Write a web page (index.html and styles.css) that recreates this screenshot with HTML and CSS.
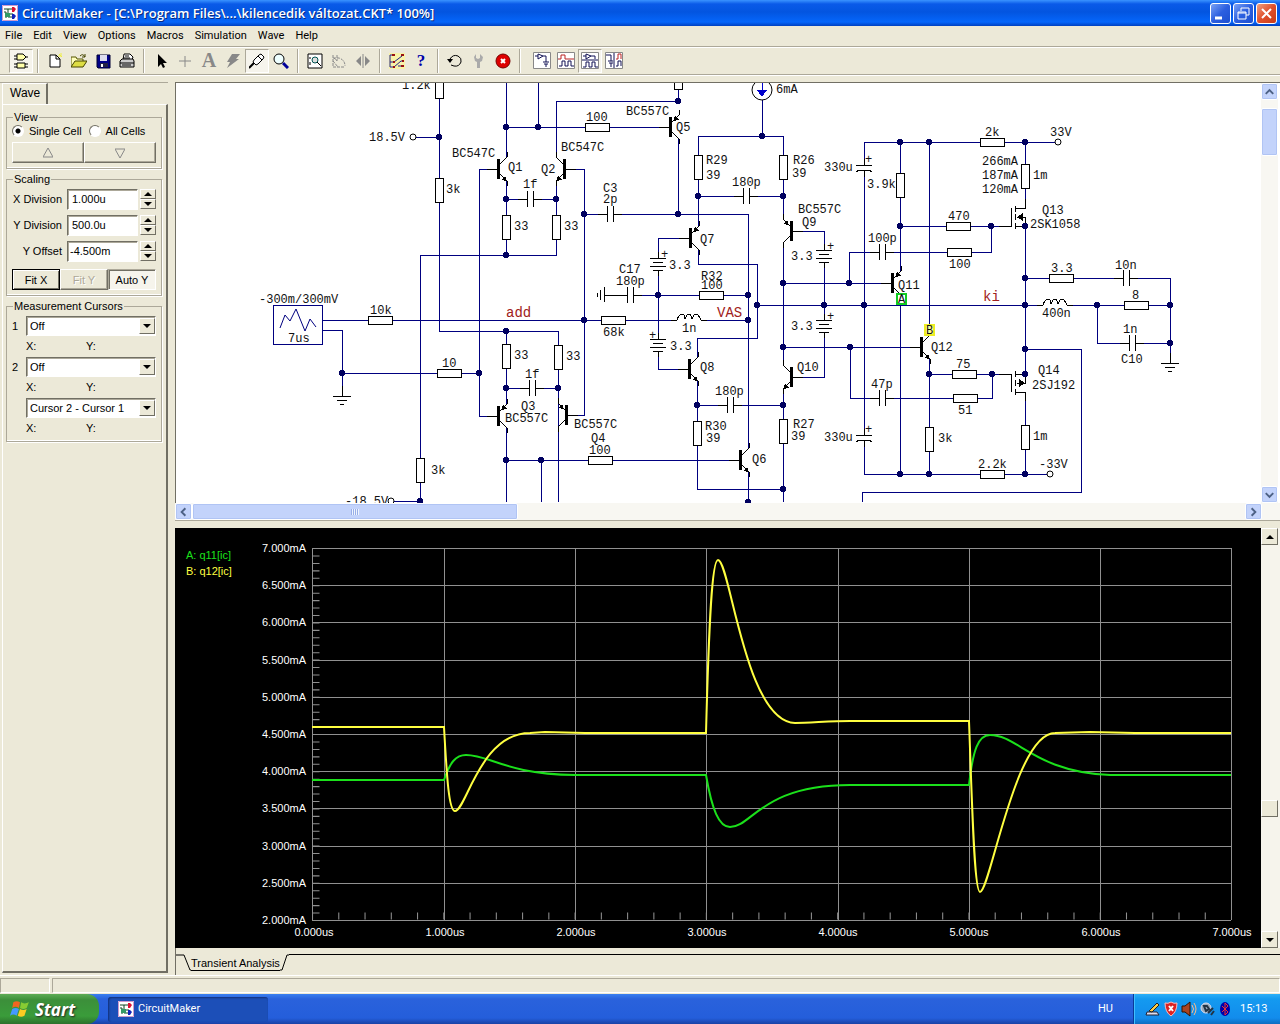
FILE: index.html
```html
<!DOCTYPE html>
<html lang="en">
<head>
    <meta charset="UTF-8">
    <meta name="viewport" content="width=device-width, initial-scale=1.0">
    <title>CircuitMaker</title>
    <link rel="stylesheet" href="styles.css">
</head>
<body>
    <!-- shared symbols -->
    <svg class="defs" aria-hidden="true">
        <defs>
            <symbol id="logo" viewBox="0 0 16 16">
                <rect width="16" height="16" fill="#fff"/>
                <path d="M.5.5h15v15H.5z" fill="none" stroke="#c9c"/>
                <path d="M2 4h9M2 7h2v6M6 4v8h6M8 9h3" fill="none" stroke="#142"/>
                <path d="M3 8h5v4H3z" fill="#396"/>
                <path d="M10 2h2l2 2-2 3h-2z" fill="#d13"/>
                <path d="M10 9h2l2 2-2 3h-2z" fill="#12b"/>
            </symbol>
            <g id="res-h"><rect x="-12" y="-4" width="24" height="8"/></g>
            <g id="res-v"><rect x="-4" y="-12" width="8" height="24"/></g>
            <g id="cap-h"><path class="gap" d="M-3 0h6"/><path d="M-12 0h9M3 0h9M-3-8v16M3-8v16"/></g>
            <g id="cap-pol"><path class="gap" d="M0-2v5"/><path d="M0-8v6M-8-2h16M0 3v7M-8 5q2-2 5-2h6q3 0 5 2"/></g>
            <g id="battery"><path class="gap" d="M0-6v12"/><path d="M-8-6h16M-5-2h10M-8 2h16M-5 6h10M0 6v6M0-6v-6"/></g>
            <g id="coil"><path class="gap" d="M-12 0h24"/><path d="M-18 0h6q2-6 5-6t3 5q2-5 4-5t3 5q2-5 4-5t5 6h6"/></g>
            <g id="gnd"><path d="M0-10V0M-9 0H9M-5 4H5M-2 8H2"/></g>
            <g id="npn">
                <path d="M-12 0h12M1-5l7-7v-5M1 5l7 7v5"/>
                <path class="solid" d="M-2-10h3v20h-3zM8 12l-6-1 4-4z"/>
            </g>
            <g id="pnp">
                <path d="M-12 0h12M1-5l7-7v-5M1 5l7 7v5"/>
                <path class="solid" d="M-2-10h3v20h-3zM2-6l2-5 4 4z"/>
            </g>
            <g id="dot"><circle r="3"/></g>
            <g id="pin"><circle r="3"/></g>
            <symbol id="xp-up" viewBox="0 0 16 16"><path d="M4 10l4-4 4 4"/></symbol>
            <symbol id="xp-down" viewBox="0 0 16 16"><path d="M4 6l4 4 4-4"/></symbol>
            <symbol id="xp-left" viewBox="0 0 16 16"><path d="M10 4L6 8l4 4"/></symbol>
            <symbol id="xp-right" viewBox="0 0 16 16"><path d="M6 4l4 4-4 4"/></symbol>
            <symbol id="tri-up" viewBox="0 0 8 8"><path d="M0 6h8L4 2z"/></symbol>
            <symbol id="tri-down" viewBox="0 0 8 8"><path d="M0 2h8L4 6z"/></symbol>
        </defs>
    </svg>

    <header class="titlebar">
        <svg class="app-icon"><use href="#logo"/></svg>
        <h1>CircuitMaker - [C:\Program Files\...\kilencedik változat.CKT* 100%]</h1>
        <div class="window-buttons">
            <button aria-label="Minimize"><svg viewBox="0 0 19 19"><path d="M4 14h7" stroke-width="3"/></svg></button>
            <button aria-label="Restore"><svg viewBox="0 0 19 19"><path d="M7 7V4h8v7h-3M4 8h8v7H4zM4 9h8" stroke-width="1"/></svg></button>
            <button class="close" aria-label="Close"><svg viewBox="0 0 19 19"><path d="M5 5l9 9M14 5l-9 9" stroke-width="2"/></svg></button>
        </div>
    </header>

    <nav class="menubar">
        <a href="#">File</a>
        <a href="#">Edit</a>
        <a href="#">View</a>
        <a href="#">Options</a>
        <a href="#">Macros</a>
        <a href="#">Simulation</a>
        <a href="#">Wave</a>
        <a href="#">Help</a>
    </nav>

    <div class="toolbar">
        <button class="pressed" aria-label="Parts"><svg viewBox="0 0 16 16"><path d="M4 1h6l3 3-3 3H4zM4 10h8v5H4z" fill="#ffa" stroke="#000"/><path d="M1 3h3M1 6h3M12 4h3M1 11h3M1 14h3M12 11h3M12 14h3" stroke="#000"/></svg></button>
        <i></i>
        <button aria-label="New"><svg viewBox="0 0 16 16"><path d="M12 1l3 3M14 0v2M11 3h4" stroke="#ee4"/><path d="M3 2h6l4 4v8H3z" fill="#fff" stroke="#000"/><path d="M9 2v4h4" fill="none" stroke="#000"/></svg></button>
        <button aria-label="Open"><svg viewBox="0 0 16 16"><path d="M0 13V4h5l1 2h6v2" fill="#ffb" stroke="#550"/><path d="M0 14l4-6h12l-4 6z" fill="#dd4" stroke="#440"/><path d="M9 3q3-3 5 1M14 1v3h-3" fill="none" stroke="#440"/></svg></button>
        <button aria-label="Save"><svg viewBox="0 0 16 16"><path d="M2 2h13v13H3l-1-1z" fill="#008" stroke="#003"/><path d="M5 2h7v6H5z" fill="#dde"/><path d="M5 10h8v4H5z" fill="#224"/><path d="M6 11h2v3H6z" fill="#fff"/></svg></button>
        <button aria-label="Print"><svg viewBox="0 0 16 16"><path d="M4 7l1-6h6l3 3-1 3" fill="#fff" stroke="#000"/><path d="M1 8l2-2h11l1 2v6H1z" fill="#ccc" stroke="#000"/><path d="M1 10h14M6 3h4M5 5h6M3 12h9" stroke="#000"/></svg></button>
        <i></i>
        <button aria-label="Select"><svg viewBox="0 0 16 16"><path d="M5 1v13l3-3 2 4 2-1-2-4h4z" fill="#000"/></svg></button>
        <button aria-label="Wire"><svg viewBox="0 0 16 16"><path d="M8 3v11M2 8h12" stroke="#888"/></svg></button>
        <button class="letter" aria-label="Text">A</button>
        <button aria-label="Delete"><svg viewBox="0 0 16 16"><path d="M7 1h8l-4 5h3L2 15l3-6H2z" fill="#888"/></svg></button>
        <button class="pressed" aria-label="Probe"><svg viewBox="0 0 16 16"><path d="M0 15l5-5" stroke="#000" stroke-width="2"/><path d="M4 9l1-2 5-5 2-1 3 3-1 2-5 5-2 1z" fill="#fff" stroke="#000"/><path d="M9 3l4 4" stroke="#000"/></svg></button>
        <button aria-label="Zoom"><svg viewBox="0 0 16 16"><circle cx="6" cy="6" r="5" fill="#eff" stroke="#000"/><path d="M10 10l5 5" stroke="#009" stroke-width="3"/></svg></button>
        <i></i>
        <button aria-label="Fit"><svg viewBox="0 0 16 16"><path d="M1 1h14v14H1z" fill="#fff" stroke="#000"/><circle cx="8" cy="7" r="3" fill="#ddd" stroke="#055"/><path d="M10 9l4 4M3 4v2M3 9v3" stroke="#000"/></svg></button>
        <button aria-label="Rotate"><svg viewBox="0 0 16 16"><path d="M2 2v12h12M2 5h6q6 2 6 8M6 2v6l-3-3M2 8l5 6" fill="none" stroke="#888" stroke-dasharray="3 1"/></svg></button>
        <button aria-label="Mirror"><svg viewBox="0 0 16 16"><path d="M8 1v14" stroke="#888"/><path d="M6 3v10L1 8zM10 3v10l5-5z" fill="#888"/></svg></button>
        <i></i>
        <button aria-label="Digital options"><svg viewBox="0 0 16 16"><path d="M0 0h16v16H0z" fill="#f8f3a8"/><path d="M4 2H1v12h4M1 9h4l8-6M5 14l7-6h3M9 13h5" stroke="#228" fill="none"/><path d="M3 1h3v2H3zM12 1h3v2h-3zM4 8h2v2H4zM13 7h2v2h-2zM4 13h2v2H4zM12 12h3v2h-3z" fill="#911"/></svg></button>
        <button class="letter help" aria-label="Help">?</button>
        <i></i>
        <button aria-label="Reset"><svg viewBox="0 0 16 16"><path d="M3 6q3-5 8-3 4 2 3 6-2 5-7 4l-3-1" fill="none" stroke="#000"/><path d="M0 6h6l-3 4z" fill="#000"/></svg></button>
        <button aria-label="Step"><svg viewBox="0 0 16 16"><path d="M5 1v4l2 1 2-1V1l3 3-1 4-2 1v6H6V9L4 8 3 4z" fill="#aaa"/></svg></button>
        <button aria-label="Stop"><svg viewBox="0 0 16 16"><circle cx="8" cy="8" r="7" fill="#d00" stroke="#700"/><path d="M6 6l4 4M10 6l-4 4" stroke="#fff" stroke-width="2"/></svg></button>
        <i></i>
        <div class="view-buttons">
            <button aria-label="Schematic"><svg viewBox="0 0 18 18"><path d="M.5.5h17v16H.5z" fill="#fff" stroke="#888"/><path d="M2 4h3M10 4h3v6M5 2v5l5-3zM10 10h6M11 12h4M13 12v3" fill="none" stroke="#115"/></svg></button>
            <button aria-label="Waves"><svg viewBox="0 0 18 18"><path d="M.5.5h17v16H.5z" fill="#fff" stroke="#888"/><path d="M1 7h3V3h4v4h9" fill="none" stroke="#b22"/><path d="M2 14h3V9h3v5h3V9h3v5h3" fill="none" stroke="#115"/></svg></button>
            <button class="pressed" aria-label="Split"><svg viewBox="0 0 18 18"><path d="M.5.5h17v16H.5z" fill="#fff" stroke="#888"/><path d="M2 4h3M5 2v5l5-3zM10 4h4v3M1 8h16M2 15h3v-5h3v5h3v-5h3v5h3" fill="none" stroke="#115"/></svg></button>
            <button aria-label="Side by side"><svg viewBox="0 0 18 18"><path d="M.5.5h17v16H.5z" fill="#fff" stroke="#888"/><path d="M1 3h5v6M3 9h5M4 11h4M6 11v4M9 1v15" fill="none" stroke="#115"/><path d="M11 7h2V2h3v5" fill="none" stroke="#b22"/><path d="M11 14h2V9h3v5" fill="none" stroke="#115"/></svg></button>
        </div>
    </div>

    <main class="workspace">
        <aside class="sidebar">
            <div class="side-tab">Wave</div>
            <form class="side-body">
                <fieldset>
                    <legend>View</legend>
                    <div class="radios">
                        <label><input type="radio" name="cells" checked>Single Cell</label>
                        <label><input type="radio" name="cells">All Cells</label>
                    </div>
                    <div class="cell-buttons">
                        <button type="button" aria-label="Previous cell"><svg viewBox="0 0 10 10"><path d="M0 9h10L5 0z"/></svg></button>
                        <button type="button" aria-label="Next cell"><svg viewBox="0 0 10 10"><path d="M0 1h10L5 10z"/></svg></button>
                    </div>
                </fieldset>
                <fieldset class="scaling">
                    <legend>Scaling</legend>
                    <div class="field">
                        <label for="xdiv">X Division</label>
                        <input type="text" id="xdiv" value="1.000u">
                        <span class="spin"><button type="button" aria-label="Increase"><svg><use href="#tri-up"/></svg></button><button type="button" aria-label="Decrease"><svg><use href="#tri-down"/></svg></button></span>
                    </div>
                    <div class="field">
                        <label for="ydiv">Y Division</label>
                        <input type="text" id="ydiv" value="500.0u">
                        <span class="spin"><button type="button" aria-label="Increase"><svg><use href="#tri-up"/></svg></button><button type="button" aria-label="Decrease"><svg><use href="#tri-down"/></svg></button></span>
                    </div>
                    <div class="field">
                        <label for="yoff">Y Offset</label>
                        <input type="text" id="yoff" class="tight" value="-4.500m">
                        <span class="spin"><button type="button" aria-label="Increase"><svg><use href="#tri-up"/></svg></button><button type="button" aria-label="Decrease"><svg><use href="#tri-down"/></svg></button></span>
                    </div>
                    <div class="fit-buttons">
                        <button type="button" class="default">Fit X</button>
                        <button type="button" disabled>Fit Y</button>
                        <button type="button" class="pressed">Auto Y</button>
                    </div>
                </fieldset>
                <fieldset class="cursors">
                    <legend>Measurement Cursors</legend>
                    <div class="cursor">
                        <label for="cur1">1</label>
                        <span class="combo"><select id="cur1"><option>Off</option></select><span class="drop"><svg><use href="#tri-down"/></svg></span></span>
                        <p><span>X:</span><span>Y:</span></p>
                    </div>
                    <div class="cursor">
                        <label for="cur2">2</label>
                        <span class="combo"><select id="cur2"><option>Off</option></select><span class="drop"><svg><use href="#tri-down"/></svg></span></span>
                        <p><span>X:</span><span>Y:</span></p>
                    </div>
                    <div class="cursor">
                        <span class="combo"><select aria-label="Difference"><option>Cursor 2 - Cursor 1</option></select><span class="drop"><svg><use href="#tri-down"/></svg></span></span>
                        <p><span>X:</span><span>Y:</span></p>
                    </div>
                </fieldset>
            </form>
        </aside>

        <section class="documents">
            <div class="schematic-pane">
                <svg class="schematic">
                    <g transform="translate(-176 -83)">
                        <!-- wires -->
                        <path class="wire" d="M439 83V331H558V428M413 137H439M506 255H420V501H391M479 169V416M479 169H498M479 416H498
                            M506 83V157M506 181V255H556V181M556 157V101H678V83M538 83V127M506 127H668M506 199H556
                            M566 169H584V415H566M584 214H748V448M678 139V214M506 331V404M506 388H558M506 428V502M541 460V502M558 427V502M506 460H738
                            M322 320H748M322 330H342V396M342 373H479M604 295H748
                            M698 226V136H783V219M762 98V136M698 196H783M690 238H658V369H690M698 250V264H757V338H697V357M697 381V489H783M697 405H783
                            M793 231H824V377H793M783 243V365M783 389V502M757 305H1170M783 283H892M783 347H921M748 472V502
                            M864 142V474H1050M864 142H1055M900 142V271M900 304V474M929 142V325M929 359V474
                            M849 283V252H991V226M900 226H1011M850 347V398H992V374M929 374H1011
                            M1025 142V208M1025 226V374M1025 392V474M1025 278H1170V363M1097 305V343H1170M1025 349H1081V492H862V502"/>
                        <!-- function generator -->
                        <path class="box" d="M273 305h49v39h-49z"/>
                        <path class="trace" d="M280 328l5-13 5 6 6-12 9 22 5-12 6 8"/>
                        <!-- parts -->
                        <g class="part">
                            <use href="#res-v" x="439" y="86"/><use href="#res-v" x="439" y="190"/><use href="#res-v" x="420" y="470"/>
                            <use href="#res-v" x="506" y="227"/><use href="#res-v" x="556" y="227"/><use href="#res-v" x="506" y="356"/><use href="#res-v" x="558" y="357"/>
                            <use href="#res-v" x="678" y="77"/><use href="#res-v" x="698" y="167"/><use href="#res-v" x="783" y="167"/>
                            <use href="#res-v" x="697" y="433"/><use href="#res-v" x="783" y="431"/><use href="#res-v" x="900" y="185"/>
                            <use href="#res-v" x="929" y="439"/><use href="#res-v" x="1025" y="176"/><use href="#res-v" x="1025" y="437"/>
                            <use href="#res-h" x="597" y="127"/><use href="#res-h" x="380" y="320"/><use href="#res-h" x="449" y="373"/>
                            <use href="#res-h" x="613" y="320"/><use href="#res-h" x="711" y="295"/><use href="#res-h" x="600" y="460"/>
                            <use href="#res-h" x="992" y="142"/><use href="#res-h" x="958" y="226"/><use href="#res-h" x="959" y="252"/>
                            <use href="#res-h" x="964" y="374"/><use href="#res-h" x="965" y="398"/><use href="#res-h" x="992" y="474"/>
                            <use href="#res-h" x="1061" y="278"/><use href="#res-h" x="1136" y="305"/>
                            <use href="#cap-h" x="530" y="199"/><use href="#cap-h" x="532" y="388"/><use href="#cap-h" x="610" y="214"/>
                            <use href="#cap-h" x="630" y="295"/><use href="#cap-h" x="746" y="196"/><use href="#cap-h" x="730" y="405"/>
                            <use href="#cap-h" x="882" y="252"/><use href="#cap-h" x="882" y="398"/><use href="#cap-h" x="1126" y="278"/><use href="#cap-h" x="1132" y="343"/>
                            <use href="#cap-pol" x="864" y="167"/><use href="#cap-pol" x="864" y="437"/>
                            <use href="#battery" x="658" y="264"/><use href="#battery" x="658" y="345"/><use href="#battery" x="824" y="256"/><use href="#battery" x="824" y="326"/>
                            <use href="#coil" x="689" y="320"/><use href="#coil" x="1055" y="305"/>
                            <use href="#gnd" x="342" y="396"/><use href="#gnd" x="1170" y="363"/>
                            <path d="M604 287v15M600 290v10M597 293v4M604 295h16"/>
                            <use href="#npn" x="499" y="169"/><use href="#npn" transform="translate(564 169) scale(-1 1)"/>
                            <use href="#pnp" x="499" y="416"/><use href="#pnp" transform="translate(566 415) scale(-1 1)"/>
                            <use href="#pnp" x="671" y="127"/><use href="#pnp" x="691" y="238"/><use href="#pnp" transform="translate(791 231) scale(-1 1)"/>
                            <use href="#npn" x="690" y="369"/><use href="#npn" x="741" y="460"/><use href="#npn" transform="translate(791 377) scale(-1 1)"/>
                            <use href="#pnp" x="893" y="283"/><use href="#npn" x="922" y="347"/>
                            <path d="M1011 208v18h-12M1015 206v6M1015 214v6M1015 223v6M1015 208h10v-9M1015 226h10v-9h-8"/>
                            <path class="solid" d="M1017 217l6-4v8z"/>
                            <path d="M1011 392v-18h-12M1015 371v6M1015 380v6M1015 389v6M1015 392h10v9M1015 374h10v9h-8"/>
                            <path class="solid" d="M1025 383l-6-4v8z"/>
                            <circle class="source" cx="762" cy="90" r="10"/>
                        </g>
                        <path d="M762 80v11" stroke="#00c"/><path d="M757 90h10l-5 7z" fill="#00c"/>
                        <!-- junctions -->
                        <g class="junctions">
                            <use href="#dot" x="439" y="137"/><use href="#dot" x="420" y="501"/><use href="#dot" x="506" y="127"/><use href="#dot" x="538" y="127"/>
                            <use href="#dot" x="506" y="199"/><use href="#dot" x="556" y="199"/><use href="#dot" x="506" y="255"/><use href="#dot" x="678" y="101"/>
                            <use href="#dot" x="584" y="214"/><use href="#dot" x="678" y="214"/><use href="#dot" x="342" y="373"/><use href="#dot" x="479" y="373"/>
                            <use href="#dot" x="506" y="331"/><use href="#dot" x="506" y="388"/><use href="#dot" x="558" y="388"/><use href="#dot" x="506" y="460"/>
                            <use href="#dot" x="541" y="460"/><use href="#dot" x="584" y="320"/><use href="#dot" x="658" y="295"/><use href="#dot" x="748" y="295"/>
                            <use href="#dot" x="748" y="320"/><use href="#dot" x="762" y="136"/><use href="#dot" x="698" y="196"/><use href="#dot" x="783" y="196"/>
                            <use href="#dot" x="783" y="283"/><use href="#dot" x="849" y="283"/><use href="#dot" x="757" y="305"/><use href="#dot" x="824" y="305"/>
                            <use href="#dot" x="864" y="305"/><use href="#dot" x="783" y="347"/><use href="#dot" x="850" y="347"/><use href="#dot" x="697" y="405"/>
                            <use href="#dot" x="783" y="405"/><use href="#dot" x="783" y="489"/><use href="#dot" x="748" y="502"/><use href="#dot" x="900" y="142"/>
                            <use href="#dot" x="929" y="142"/><use href="#dot" x="1025" y="142"/><use href="#dot" x="900" y="226"/><use href="#dot" x="991" y="226"/>
                            <use href="#dot" x="1025" y="226"/><use href="#dot" x="1025" y="278"/><use href="#dot" x="1025" y="305"/><use href="#dot" x="1025" y="349"/>
                            <use href="#dot" x="1025" y="374"/><use href="#dot" x="929" y="374"/><use href="#dot" x="992" y="374"/><use href="#dot" x="1097" y="305"/>
                            <use href="#dot" x="1170" y="305"/><use href="#dot" x="1170" y="343"/><use href="#dot" x="900" y="474"/><use href="#dot" x="929" y="474"/>
                            <use href="#dot" x="1025" y="474"/>
                        </g>
                        <g class="pins">
                            <use href="#pin" x="413" y="137"/><use href="#pin" x="391" y="501"/><use href="#pin" x="1058" y="142"/><use href="#pin" x="1050" y="474"/>
                        </g>
                        <!-- probes -->
                        <rect class="probe probe-a" x="897" y="294" width="9" height="10"/>
                        <rect class="probe probe-b" x="925" y="325" width="9" height="10"/>
                        <!-- labels -->
                        <g class="labels">
                            <text x="402" y="89">1.2k</text><text x="369" y="141">18.5V</text><text x="446" y="193">3k</text>
                            <text x="452" y="157">BC547C</text><text x="561" y="151">BC547C</text><text x="508" y="171">Q1</text><text x="541" y="173">Q2</text>
                            <text x="586" y="121">100</text><text x="626" y="115">BC557C</text><text x="676" y="131">Q5</text>
                            <text x="523" y="188">1f</text><text x="514" y="230">33</text><text x="564" y="230">33</text>
                            <text x="603" y="192">C3</text><text x="603" y="203">2p</text><text x="259" y="303">-300m/300mV</text><text x="288" y="342">7us</text>
                            <text x="370" y="314">10k</text><text x="442" y="367">10</text><text x="603" y="336">68k</text><text x="682" y="332">1n</text>
                            <text x="514" y="359">33</text><text x="566" y="360">33</text><text x="525" y="378">1f</text>
                            <text x="521" y="410">Q3</text><text x="505" y="422">BC557C</text><text x="574" y="428">BC557C</text><text x="591" y="442">Q4</text><text x="589" y="454">100</text>
                            <text x="431" y="474">3k</text><text x="345" y="505">-18.5V</text>
                            <text x="619" y="273">C17</text><text x="616" y="285">180p</text><text x="669" y="269">3.3</text><text x="670" y="350">3.3</text>
                            <text x="661" y="258">+</text><text x="649" y="339">+</text><text x="827" y="250">+</text><text x="827" y="320">+</text>
                            <text x="865" y="163">+</text><text x="865" y="433">+</text>
                            <text x="701" y="280">R32</text><text x="701" y="289">100</text><text x="776" y="93">6mA</text>
                            <text x="706" y="164">R29</text><text x="706" y="179">39</text><text x="793" y="164">R26</text><text x="792" y="177">39</text>
                            <text x="732" y="186">180p</text><text x="700" y="243">Q7</text><text x="798" y="213">BC557C</text><text x="802" y="226">Q9</text>
                            <text x="791" y="260">3.3</text><text x="791" y="330">3.3</text><text x="700" y="371">Q8</text><text x="797" y="371">Q10</text>
                            <text x="715" y="395">180p</text><text x="705" y="430">R30</text><text x="706" y="442">39</text><text x="793" y="428">R27</text><text x="791" y="440">39</text>
                            <text x="752" y="463">Q6</text><text x="824" y="171">330u</text><text x="824" y="441">330u</text><text x="867" y="188">3.9k</text>
                            <text x="985" y="136">2k</text><text x="1050" y="136">33V</text><text x="982" y="165">266mA</text><text x="982" y="179">187mA</text><text x="982" y="193">120mA</text>
                            <text x="1033" y="179">1m</text><text x="1042" y="214">Q13</text><text x="1030" y="228">2SK1058</text><text x="948" y="220">470</text>
                            <text x="868" y="242">100p</text><text x="949" y="268">100</text><text x="898" y="289">Q11</text><text x="931" y="351">Q12</text>
                            <text x="1051" y="272">3.3</text><text x="1115" y="269">10n</text><text x="1042" y="317">400n</text><text x="1132" y="299">8</text>
                            <text x="1123" y="333">1n</text><text x="1121" y="363">C10</text><text x="956" y="368">75</text><text x="871" y="388">47p</text>
                            <text x="958" y="414">51</text><text x="1038" y="374">Q14</text><text x="1032" y="389">2SJ192</text><text x="1033" y="440">1m</text>
                            <text x="938" y="442">3k</text><text x="978" y="468">2.2k</text><text x="1039" y="468">-33V</text>
                            <text x="898" y="303">A</text><text x="926" y="334">B</text>
                        </g>
                        <g class="nets">
                            <text x="506" y="317">add</text><text x="717" y="317">VAS</text><text x="983" y="301">ki</text>
                        </g>
                    </g>
                </svg>
                <div class="xp-scroll vertical">
                    <button aria-label="Scroll up"><svg><use href="#xp-up"/></svg></button>
                    <div class="track"><div class="thumb"></div></div>
                    <button aria-label="Scroll down"><svg><use href="#xp-down"/></svg></button>
                </div>
            </div>
            <div class="xp-scroll horizontal">
                <button aria-label="Scroll left"><svg><use href="#xp-left"/></svg></button>
                <div class="track"><div class="thumb"></div></div>
                <button aria-label="Scroll right"><svg><use href="#xp-right"/></svg></button>
            </div>

            <div class="wave-pane">
                <svg class="wave" viewBox="175 528 1086 420" preserveAspectRatio="xMinYMin">
                    <path class="grid" d="M312 548H1231M312 585H1231M312 622H1231M312 660H1231M312 697H1231M312 734H1231M312 771H1231M312 808H1231M312 846H1231M312 883H1231M312 920H1231
                        M312 548V920M444 548V920M575 548V920M706 548V920M838 548V920M969 548V920M1100 548V920M1231 548V920"/>
                    <path class="ticks" pathLength="350" stroke-dasharray="1 6" d="M316 548V920"/>
                    <path class="ticks" pathLength="875" stroke-dasharray="1 24" d="M312 916H1231"/>
                    <path class="trace-a" d="M312 780H444C450 762 456 755 466 755C490 755 505 774 575 775H706C712 810 719 827 730 827C752 827 762 785 850 785H969C973 750 978 735 990 735C1018 735 1035 772 1110 775H1231"/>
                    <path class="trace-b" d="M312 727H444C447 780 449 811 455 811C466 811 480 733 530 733L545 732L585 733H706C709 620 712 560 718 560C730 560 745 722 795 723C810 723 830 721 850 721H969C972 800 974 892 980 892C990 892 1015 733 1055 733L1090 732L1135 733H1231"/>
                    <g class="y-labels">
                        <text x="306" y="552">7.000mA</text><text x="306" y="589">6.500mA</text><text x="306" y="626">6.000mA</text>
                        <text x="306" y="664">5.500mA</text><text x="306" y="701">5.000mA</text><text x="306" y="738">4.500mA</text>
                        <text x="306" y="775">4.000mA</text><text x="306" y="812">3.500mA</text><text x="306" y="850">3.000mA</text>
                        <text x="306" y="887">2.500mA</text><text x="306" y="924">2.000mA</text>
                    </g>
                    <g class="x-labels">
                        <text x="314" y="936">0.000us</text><text x="445" y="936">1.000us</text><text x="576" y="936">2.000us</text><text x="707" y="936">3.000us</text>
                        <text x="838" y="936">4.000us</text><text x="969" y="936">5.000us</text><text x="1101" y="936">6.000us</text><text x="1232" y="936">7.000us</text>
                    </g>
                    <text class="key-a" x="186" y="559">A: q11[ic]</text>
                    <text class="key-b" x="186" y="575">B: q12[ic]</text>
                </svg>
                <div class="classic-scroll">
                    <button aria-label="Scroll up"><svg><use href="#tri-up"/></svg></button>
                    <div class="track"><div class="thumb"></div></div>
                    <button aria-label="Scroll down"><svg><use href="#tri-down"/></svg></button>
                </div>
            </div>
            <div class="sheet-tabs">
                <svg class="edge" viewBox="0 0 15 20"><path d="M0 1h8l6 15h1"/></svg>
                <a href="#">Transient Analysis</a>
                <svg class="edge" viewBox="0 0 9 20"><path d="M0 16h2L7 1h2"/></svg>
                <span class="line"></span>
            </div>
        </section>
    </main>

    <div class="statusbar"><span></span><span></span></div>

    <footer class="taskbar">
        <button class="start">
            <svg viewBox="0 0 18 18"><path d="M3 3q3-2 6 0L8 8Q5 6 2 8z" fill="#f26522"/><path d="M10 3q3 2 7 0l-2 5q-3 2-6 0z" fill="#8c3"/><path d="M2 9q3-2 6 0l-2 6q-3-2-6 0z" fill="#49f"/><path d="M9 9q3 2 6 0l-2 6q-3 2-6 0z" fill="#fc2"/></svg>
            Start
        </button>
        <button class="task"><svg><use href="#logo"/></svg>CircuitMaker</button>
        <span class="lang">HU</span>
        <div class="tray">
            <svg viewBox="0 0 16 16"><path d="M2 11h10l2 3H1z" fill="#dde" stroke="#223"/><path d="M4 10l8-8 2 2-7 7z" fill="#fc4" stroke="#222"/></svg>
            <svg viewBox="0 0 16 16"><path d="M8 1q3 2 6 1 0 9-6 13Q2 11 2 2q3 1 6-1z" fill="#d22" stroke="#fbb"/><path d="M6 5l4 5M10 5l-4 5" stroke="#fff" stroke-width="2"/></svg>
            <svg viewBox="0 0 16 16"><path d="M1 5h3l5-4v14l-5-4H1z" fill="#a42" stroke="#310"/><path d="M11 4q3 4 0 8M13 2q4 6 0 12" fill="none" stroke="#fb8"/></svg>
            <svg viewBox="0 0 16 16"><circle cx="7" cy="7" r="5" fill="#9ab" stroke="#dde"/><path d="M5 5h3l2 3-3 2zM9 12l5-5M12 14l3-4" fill="none" stroke="#234" stroke-width="2"/></svg>
            <svg viewBox="0 0 16 16"><ellipse cx="8" cy="8" rx="5" ry="7" fill="#00a"/><path d="M5 5l6 6-3 3V2l3 3-6 6" fill="none" stroke="#e33"/></svg>
            <time>15:13</time>
        </div>
    </footer>
</body>
</html>
```
FILE: styles.css
```css
* {
    box-sizing: border-box;
}
body {
    margin: 0;
    height: 100vh;
    display: flex;
    flex-direction: column;
    overflow: hidden;
    background: #ece9d8;
    color: #000;
    font-family: "Liberation Sans", Arial, sans-serif;
    font-size: 11px;
    line-height: 14px;
}
button, input, select {
    font: inherit;
    color: inherit;
    margin: 0;
    padding: 0;
    border-radius: 0;
}
button {
    display: flex;
    align-items: center;
    justify-content: center;
    background: #ece9d8;
    border: 0;
}
a {
    color: inherit;
    text-decoration: none;
}
.defs {
    position: absolute;
    width: 0;
    height: 0;
}
.defs g path {
    fill: none;
}
.defs g .solid {
    fill: #000;
    stroke: none;
}
.defs g .gap {
    stroke: #fff;
}

/* title bar */
.titlebar {
    flex: none;
    height: 26px;
    display: flex;
    align-items: center;
    padding: 0 3px 0 2px;
    background: linear-gradient(#3a93ff, #0a5ae8 4px, #0355e0 12px, #0566fb 22px, #0040c0);
    color: #fff;
}
.app-icon {
    width: 16px;
    height: 16px;
}
.titlebar h1 {
    flex: 1;
    margin: 0 0 0 4px;
    font-family: "Open Sans", sans-serif;
    font-size: 13px;
    font-weight: 600;
    text-shadow: 1px 1px #0a2a80;
    white-space: nowrap;
}
.window-buttons {
    display: flex;
    gap: 2px;
}
.window-buttons button {
    width: 21px;
    height: 21px;
    border: 1px solid #fff;
    border-radius: 3px;
    background: linear-gradient(135deg, #7aa2f5, #2c5fe0 50%, #1c4fd0);
}
.window-buttons .close {
    background: linear-gradient(135deg, #f0a080, #e0502c 50%, #c83c18);
}
.window-buttons svg {
    width: 19px;
    height: 19px;
    fill: none;
    stroke: #fff;
}

/* menu and toolbar */
.menubar {
    flex: none;
    height: 20px;
    display: flex;
    align-items: center;
    gap: 11px;
    padding-left: 5px;
    font-family: Roboto, sans-serif;
    font-size: 11px;
}
.toolbar {
    flex: none;
    height: 29px;
    margin-bottom: 7px;
    display: flex;
    align-items: center;
    padding-left: 9px;
    border-top: 1px solid #aca899;
    border-bottom: 1px solid #aca899;
    box-shadow: inset 0 1px #fff, 0 1px #fff;
}
.toolbar button {
    width: 24px;
    height: 24px;
}
.toolbar svg {
    width: 16px;
    height: 16px;
    fill: none;
}
.toolbar i {
    width: 2px;
    height: 24px;
    margin: 0 4px;
    border-left: 1px solid #aca899;
    border-right: 1px solid #fff;
}
.toolbar .pressed, .fit-buttons .pressed {
    background: #f6f4ec;
    border: 1px solid;
    border-color: #aca899 #fff #fff #aca899;
}
.toolbar .letter {
    font: bold 20px "Liberation Serif", serif;
    color: #888;
}
.toolbar .help {
    font-size: 17px;
    color: #00a;
}
.view-buttons {
    display: flex;
    margin-left: 5px;
}
.view-buttons svg {
    width: 18px;
    height: 18px;
}

/* left panel */
.workspace {
    flex: 1;
    min-height: 0;
    display: flex;
    gap: 7px;
}
.sidebar {
    flex: none;
    width: 168px;
    display: flex;
    flex-direction: column;
    padding-left: 2px;
    border-top: 1px solid #aca899;
}
.side-tab {
    width: 46px;
    height: 21px;
    padding: 2px 0 0 7px;
    border-left: 1px solid #fff;
    border-right: 2px solid #716f64;
    border-top: 1px solid #fff;
    font-size: 12px;
}
.side-body {
    flex: 1;
    padding: 5px 4px 0 3px;
    border: 1px solid #fff;
    border-right: 2px solid #716f64;
    border-bottom: 2px solid #716f64;
    margin-bottom: 2px;
}
fieldset {
    margin: 0 0 3px;
    padding: 0 5px 5px;
    border: 1px solid #aca899;
    box-shadow: inset 0 -1px #fff, 1px 1px #fff;
    min-width: 0;
}
legend {
    padding: 0 1px;
    margin-left: 1px;
}
.radios {
    display: flex;
    gap: 7px;
}
.radios label {
    display: flex;
    align-items: center;
    gap: 5px;
    white-space: nowrap;
}
.radios input {
    appearance: none;
    width: 12px;
    height: 12px;
    border: 1px solid;
    border-color: #716f64 #fff #fff #716f64;
    border-radius: 50%;
    background: #fff;
}
.radios input:checked {
    background: radial-gradient(#000 2px, #fff 3px);
}
.cell-buttons, .fit-buttons {
    display: flex;
    margin-top: 4px;
}
.cell-buttons button, .fit-buttons button {
    flex: 1;
    height: 21px;
    border: 1px solid;
    border-color: #fff #716f64 #716f64 #fff;
    box-shadow: inset -1px -1px #aca899;
}
.cell-buttons svg {
    width: 10px;
    height: 10px;
    fill: none;
    stroke: #888;
}
.scaling {
    padding-top: 2px;
}
.field {
    display: flex;
    align-items: center;
    gap: 2px;
    height: 22px;
    margin-bottom: 4px;
}
.field label {
    width: 50px;
    margin-right: 3px;
    text-align: right;
    white-space: nowrap;
}
.field input {
    flex: 1;
    min-width: 0;
    height: 21px;
    padding-left: 4px;
    background: #fff;
    border: 1px solid;
    border-color: #716f64 #fff #fff #716f64;
    box-shadow: inset 1px 1px #aca899;
}
.field .tight {
    padding-left: 2px;
}
.spin button {
    width: 16px;
    height: 10px;
    border: 1px solid;
    border-color: #fff #716f64 #716f64 #fff;
}
.spin svg, .drop svg, .classic-scroll svg {
    width: 8px;
    height: 8px;
}
.fit-buttons {
    margin-top: 7px;
}
.fit-buttons .default {
    border-color: #000;
    box-shadow: inset 1px 1px #fff, inset -1px -1px #716f64;
}
.fit-buttons .pressed {
    box-shadow: inset 1px 1px #716f64;
}
.fit-buttons :disabled {
    color: #aca899;
    text-shadow: 1px 1px #fff;
}
.cursors {
    padding: 3px 5px 2px;
}
.cursor {
    display: grid;
    grid-template-columns: 14px 1fr;
    align-items: center;
    margin-bottom: 1px;
}
.combo {
    grid-column: 2;
    display: grid;
}
.combo select, .drop {
    grid-area: 1 / 1;
}
.combo select {
    appearance: none;
    height: 20px;
    padding-left: 3px;
    background: #fff;
    border: 1px solid;
    border-color: #716f64 #fff #fff #716f64;
    box-shadow: inset 1px 1px #aca899;
}
.drop {
    justify-self: end;
    align-self: center;
    width: 16px;
    height: 16px;
    margin-right: 1px;
    display: flex;
    align-items: center;
    justify-content: center;
    background: #ece9d8;
    border: 1px solid;
    border-color: #fff #716f64 #716f64 #fff;
    pointer-events: none;
}
.cursor p {
    grid-column: 2;
    display: grid;
    grid-template-columns: 60px 1fr;
    margin: 3px 0;
}

/* schematic */
.documents {
    flex: 1;
    min-width: 0;
    display: flex;
    flex-direction: column;
    border-top: 1px solid #716f64;
}
.schematic-pane, .wave-pane {
    flex: 1 1 0;
    min-height: 0;
    display: flex;
    padding-right: 2px;
}
.schematic-pane {
    background: #fff;
}
.schematic {
    flex: 1;
    min-width: 0;
    height: 100%;
    border-left: 1px solid #716f64;
    shape-rendering: crispEdges;
}
.wire, .box, .trace {
    fill: none;
    stroke: #000080;
}
.trace {
    shape-rendering: auto;
}
.part {
    fill: #fff;
    stroke: #000;
}
.part path {
    fill: none;
}
.part .solid {
    fill: #000;
    stroke: none;
}
.part .source {
    shape-rendering: auto;
}
.junctions {
    fill: #000060;
}
.pins {
    fill: #fff;
    stroke: #000;
    shape-rendering: auto;
}
.probe {
    fill: #fff;
    stroke-width: 2;
}
.probe-a {
    stroke: #1c2;
}
.probe-b {
    fill: #ff9;
    stroke: #ee2;
}
.labels, .nets {
    font-family: "Liberation Mono", "Courier New", monospace;
    font-size: 12px;
    fill: #111;
}
.nets {
    font-size: 14px;
    fill: #a02020;
}
.xp-scroll {
    display: flex;
    background: #f8f7f2;
}
.xp-scroll button, .xp-scroll .thumb {
    flex: none;
    border: 1px solid #fff;
    border-radius: 2px;
    background: #c3d3fb;
    box-shadow: inset 0 0 0 1px #b0c4f4;
}
.xp-scroll button {
    width: 17px;
    height: 17px;
}
.xp-scroll svg {
    width: 16px;
    height: 16px;
    fill: none;
    stroke: #4d6185;
    stroke-width: 2;
}
.xp-scroll .track {
    flex: 1;
}
.vertical {
    flex-direction: column;
    width: 17px;
}
.vertical .thumb {
    height: 48px;
    margin-top: 8px;
}
.horizontal {
    flex: none;
    height: 18px;
    margin-bottom: 7px;
    padding-right: 18px;
    border-bottom: 1px solid #aca899;
}
.horizontal .thumb {
    width: 31%;
    height: 17px;
    background: repeating-linear-gradient(90deg, #98aee8 0 1px, #eef4fe 1px 2px) center / 8px 6px no-repeat #c3d3fb;
}

/* wave display */
.wave-pane {
    background: #000;
    padding-right: 0;
}
.wave {
    flex: 1;
    min-width: 0;
    height: 100%;
    font-size: 11px;
}
.grid {
    fill: none;
    stroke: #909090;
    shape-rendering: crispEdges;
}
.ticks {
    fill: none;
    stroke: #909090;
    stroke-width: 7;
}
.trace-a, .trace-b {
    fill: none;
    stroke-width: 2;
}
.trace-a {
    stroke: #1be01b;
}
.trace-b {
    stroke: #ffff40;
}
.y-labels, .x-labels {
    fill: #fff;
    text-anchor: end;
}
.x-labels {
    text-anchor: middle;
}
.key-a {
    fill: #1be01b;
}
.key-b {
    fill: #ffff40;
}
.classic-scroll {
    flex: none;
    width: 19px;
    padding-right: 2px;
    display: flex;
    flex-direction: column;
    background: #f6f4ec;
}
.classic-scroll button, .classic-scroll .thumb {
    width: 17px;
    height: 17px;
    background: #ece9d8;
    border: 1px solid;
    border-color: #fff #716f64 #716f64 #fff;
}
.classic-scroll .track {
    flex: 1;
    display: flex;
    flex-direction: column;
    justify-content: flex-end;
}
.classic-scroll .thumb {
    margin-bottom: 114px;
}
.sheet-tabs {
    flex: none;
    height: 27px;
    padding-top: 6px;
    display: flex;
    border-left: 1px solid #716f64;
}
.sheet-tabs a {
    height: 17px;
    padding-top: 2px;
    border-bottom: 1px solid #000;
}
.sheet-tabs .edge {
    height: 20px;
    width: 15px;
    fill: none;
    stroke: #000;
}
.sheet-tabs a + .edge {
    width: 9px;
}
.sheet-tabs .line {
    flex: 1;
    border-top: 1px solid #000;
}

/* status bar and taskbar */
.statusbar {
    flex: none;
    height: 19px;
    padding: 2px 0 1px;
    display: flex;
    gap: 2px;
    border-top: 1px solid #fff;
}
.statusbar span {
    width: 50px;
    border: 1px solid;
    border-color: #aca899 #fff #fff #aca899;
}
.statusbar span + span {
    flex: 1;
}
.taskbar {
    flex: none;
    height: 30px;
    display: flex;
    align-items: center;
    background: linear-gradient(#3a80f0, #2a62dc 5px, #245edb 24px, #1941a5);
    color: #fff;
    font-family: Roboto, sans-serif;
}
.start {
    width: 99px;
    height: 30px;
    gap: 5px;
    padding-right: 14px;
    border-radius: 0 12px 12px 0;
    background: linear-gradient(#5eac56, #3c8f3a 6px, #3a9c3a 22px, #2c702c);
    font: italic bold 17px "Open Sans", sans-serif;
    text-shadow: 1px 1px 2px #222;
}
.start svg {
    width: 20px;
    height: 20px;
}
.task {
    width: 160px;
    height: 25px;
    margin-left: 9px;
    padding-left: 10px;
    justify-content: flex-start;
    gap: 4px;
    border-radius: 3px;
    background: #1c4fb8;
    box-shadow: inset 1px 1px 2px #123078;
}
.task svg, .tray svg {
    width: 16px;
    height: 16px;
}
.lang {
    margin-left: auto;
    margin-right: 20px;
}
.tray {
    width: 147px;
    height: 30px;
    padding-left: 11px;
    display: flex;
    align-items: center;
    gap: 2px;
    border-left: 1px solid #0a3a98;
    background: linear-gradient(#2cb0f8, #149af0 5px, #128cec 24px, #0f6cc0);
    box-shadow: inset 1px 0 #40c0ff;
}
.tray time {
    margin-left: 5px;
}
```
